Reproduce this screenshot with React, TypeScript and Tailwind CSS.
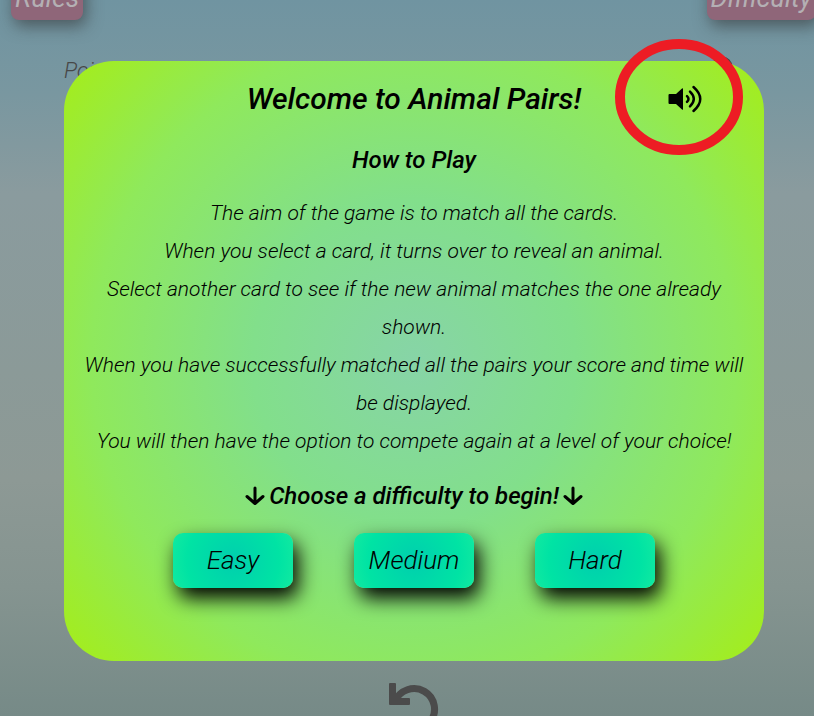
import React from "react";

const levels = ["Easy", "Medium", "Hard"];

const rules = [
  "The aim of the game is to match all the cards.",
  "When you select a card, it turns over to reveal an animal.",
  "Select another card to see if the new animal matches the one already shown.",
  "When you have successfully matched all the pairs your score and time will be displayed.",
  "You will then have the option to compete again at a level of your choice!",
];

function ArrowDown() {
  return (
    <svg viewBox="0 0 20 20" className="h-5 w-5" fill="none" stroke="currentColor" strokeWidth="3" strokeLinecap="round" strokeLinejoin="round" aria-hidden="true">
      <path d="M10 2v15M2 10.500l8 7 8-7" />
    </svg>
  );
}

function Speaker() {
  return (
    <svg viewBox="0 0 34 28" className="h-7 w-[34px]" fill="none" stroke="currentColor" strokeWidth="2.500" strokeLinecap="round" aria-hidden="true">
      <path d="M1.500 9H8l6-5.500q1-.7 1 .6v19.800q0 1.300-1 .6L8 19H1.500q-1 0-1-1v-8q0-1 1-1z" fill="currentColor" stroke="none" />
      <path d="M19 11.200q3 2.800 0 5.600M22 6.700q7.600 7.300 0 14.600M25.500 2q13.500 12 0 24" />
    </svg>
  );
}

function Clock() {
  return (
    <svg viewBox="0 0 22 22" className="h-[22px] w-[22px]" fill="none" stroke="currentColor" strokeWidth="3" aria-hidden="true">
      <circle cx="11" cy="11" r="9" />
      <path d="M11 6v6h4" />
    </svg>
  );
}

function Undo() {
  return (
    <svg viewBox="0 0 50 50" className="h-[50px] w-[50px]" fill="none" aria-hidden="true">
      <path d="M6 18.500A20.500 20.500 0 1 1 10 40" stroke="currentColor" strokeWidth="7" />
      <path d="M1 0h5q1 0 1 1v14h13q1 0 1 1v5q0 1-1 1H1q-1 0-1-1V1q0-1 1-1z" fill="currentColor" />
    </svg>
  );
}

function NavButton({ children }: { children: React.ReactNode }) {
  return (
    <button className="h-11 rounded-lg bg-[#8f6679] px-1 text-[27px] font-normal text-[#b4b0b4] italic shadow-[3px_6px_16px_rgba(50,50,50,0.6)]">
      {children}
    </button>
  );
}

export default function App() {
  return (
    <div className="h-screen overflow-hidden font-['Roboto','Open_Sans',sans-serif] font-light italic text-black">
      <div className="relative flex h-full w-[calc(100%+14px)] flex-col bg-[linear-gradient(to_bottom,#7094a1_0%,#7997a0_13%,#8a9b9e_27%,#8b9a98_52%,#8d9995_67%,#859490_82%,#768a87_100%)]">
        <header className="-mt-6 flex shrink-0 justify-between pr-3 pl-[11px]">
          <NavButton>Rules</NavButton>
          <NavButton>Difficulty</NavButton>
        </header>
        <div className="mx-auto mt-9 flex w-[700px] justify-between pr-[31px] text-[22px] leading-[30px] text-[#474747]">
          <p>Points: 0</p>
          <Clock />
        </div>
        <footer className="mx-auto mt-auto -mb-[17px] text-[#4b4b4b]">
          <button aria-label="Restart" className="block">
            <Undo />
          </button>
        </footer>

        <main className="absolute inset-x-0 top-[61px] flex justify-center">
          <section className="relative flex w-[700px] flex-col items-center rounded-[50px] bg-[radial-gradient(circle,#87d4a7_0%,#82df8b_35%,#8fe95c_70%,#a5ed18_100%)] px-4 pt-[15px] pb-[73px]">
            <h1 className="text-[30px] leading-[46px] font-medium">Welcome to Animal Pairs!</h1>
            <h2 className="mt-5 text-[24px] leading-9 font-medium">How to Play</h2>
            <div className="mt-4 text-center text-[21px] leading-[38px]">
              {rules.map((rule) => (
                <p key={rule}>{rule}</p>
              ))}
            </div>
            <h2 className="mt-[18px] flex items-center gap-1 text-[24px] leading-9 font-medium">
              <ArrowDown />
              Choose a difficulty to begin!
              <ArrowDown />
            </h2>
            <div className="mt-[19px] flex gap-[61px]">
              {levels.map((level) => (
                <button
                  key={level}
                  className="h-[55px] w-[120px] rounded-[10px] bg-[radial-gradient(circle,#00cfae_0%,#00e3a4_70%,#12eaa0_100%)] text-[26px] font-light italic shadow-[5px_10px_20px_#000]"
                >
                  {level}
                </button>
              ))}
            </div>
            <button aria-label="Toggle sound" className="absolute top-6 right-[62px]">
              <Speaker />
            </button>
            <svg viewBox="0 0 128 116" className="pointer-events-none absolute -top-[22px] right-[21px] h-[116px] w-32" aria-hidden="true">
              <ellipse cx="64" cy="58" rx="59" ry="53" fill="none" stroke="#ed1c24" strokeWidth="10" />
            </svg>
          </section>
        </main>
      </div>
    </div>
  );
}
